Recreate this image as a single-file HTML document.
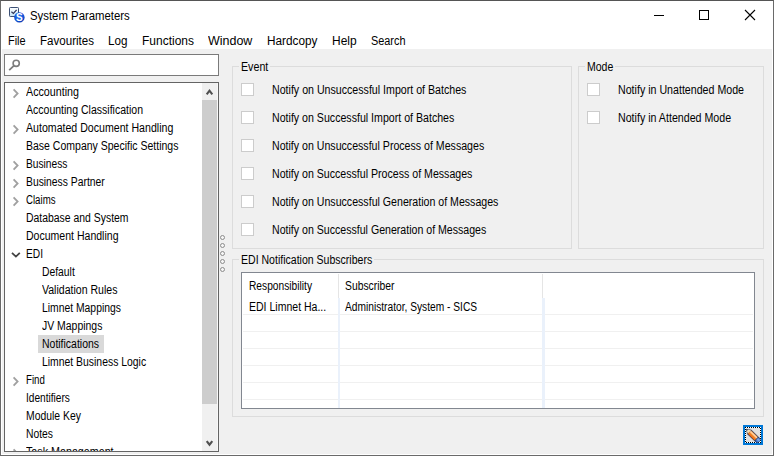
<!DOCTYPE html>
<html><head><meta charset="utf-8"><title>System Parameters</title>
<style>
html,body{margin:0;padding:0}
body{width:774px;height:456px;position:relative;overflow:hidden;background:#f0f0f0;font:12px/14px "Liberation Sans",Arial,sans-serif;color:#000}
div,span,svg{position:absolute;box-sizing:border-box}
.t{white-space:nowrap;transform-origin:0 0;display:block;line-height:14px;height:14px}
#frame{left:0;top:0;width:774px;height:456px;border:1px solid #6a6a6a;border-top-color:#555;pointer-events:none}
#inner{left:1px;top:1px;width:772px;height:454px;border:1px solid #fff;pointer-events:none}
#title{left:1px;top:1px;width:772px;height:48px;background:#fff}
#search{left:4px;top:54px;width:215px;height:22px;background:#fff;border:1px solid #7a7a7a}
#tree{left:4px;top:82px;width:215px;height:370px;background:#fff;border:1px solid #646464;overflow:hidden}
#sb{left:197px;top:0;width:16px;height:368px;background:#f0f0f0;border-right:1px solid #f8f8f8}
#thumb{left:0;top:17px;width:15px;height:304px;background:#cdcdcd}
#sel{left:33px;top:252px;width:66px;height:18px;background:#d9d9d9}
.gb{border:1px solid #dcdcdc}
.gl{background:#f0f0f0;height:14px}
.cb{width:13px;height:13px;background:#fff;border:1px solid #cccccc}
#grid{left:241px;top:272px;width:514px;height:137px;background:#fff;border:1px solid #828790}
.rl{left:243px;width:510px;height:1px;background:#f0f0f0}
.hs{width:1px;top:274px;height:24px;background:#e5e5e5}
.bs{width:2px;top:298px;height:110px;background:#eaf1fb}
.dot{left:220px;width:5px;height:5px;border:1px solid #8c8c8c;border-radius:50%;background:#f6f6f6}
#btn{left:743px;top:425px;width:20px;height:20px;border:2px solid #0078d7;background:#e1e1e1}
.fd{background:repeating-linear-gradient(90deg,#000 0 1px,#fff 1px 2px)}
.fv{background:repeating-linear-gradient(180deg,#000 0 1px,#fff 1px 2px)}
</style></head><body>
<div id="title"></div>
<svg id="appicon" style="left:9px;top:7px" width="17" height="17" viewBox="0 0 17 17">
<defs><linearGradient id="cbg" x1="0" y1="0" x2="0" y2="1"><stop offset="0" stop-color="#ffffff"/><stop offset="1" stop-color="#c4e4f7"/></linearGradient>
<radialGradient id="sg" cx="0.45" cy="0.4" r="0.65"><stop offset="0" stop-color="#2a78f0"/><stop offset="0.7" stop-color="#1150d8"/><stop offset="1" stop-color="#0a2f9a"/></radialGradient></defs>
<rect x="0.5" y="0.5" width="9" height="9" rx="0.8" fill="url(#cbg)" stroke="#3b4f74" stroke-width="1"/>
<path d="M2.4 4.8 L4.4 6.5 L7.6 2.9" fill="none" stroke="#2d3458" stroke-width="1.2"/>
<circle cx="10.4" cy="10.4" r="5.2" fill="url(#sg)"/>
<text x="10.4" y="14.3" font-family="Liberation Sans,sans-serif" font-weight="bold" font-size="10" fill="#fff" text-anchor="middle">S</text>
</svg>
<svg style="left:640px;top:0" width="134" height="32" viewBox="0 0 134 32">
<path d="M14 15.5 H24" stroke="#000" stroke-width="1"/>
<rect x="59.5" y="10.5" width="9" height="9" fill="none" stroke="#000" stroke-width="1"/>
<path d="M105 10 L115 20 M115 10 L105 20" stroke="#000" stroke-width="1.1"/>
</svg>
<div id="search"><svg style="left:3px;top:3px" width="14" height="14" viewBox="0 0 14 14"><circle cx="8.2" cy="5.3" r="3.1" fill="none" stroke="#7c7c7c" stroke-width="1.6"/><path d="M6 7.6 L1.2 12.2" stroke="#7c7c7c" stroke-width="1.8"/></svg></div>
<div id="tree">
<div id="sel"></div>
<svg class="cv" style="left:7px;top:5px" width="8" height="11" viewBox="0 0 8 11"><path d="M1.6 1.4 L5.6 5.5 L1.6 9.6" fill="none" stroke="#a0a0a0" stroke-width="1.8"/></svg><svg class="cv" style="left:7px;top:41px" width="8" height="11" viewBox="0 0 8 11"><path d="M1.6 1.4 L5.6 5.5 L1.6 9.6" fill="none" stroke="#a0a0a0" stroke-width="1.8"/></svg><svg class="cv" style="left:7px;top:77px" width="8" height="11" viewBox="0 0 8 11"><path d="M1.6 1.4 L5.6 5.5 L1.6 9.6" fill="none" stroke="#a0a0a0" stroke-width="1.8"/></svg><svg class="cv" style="left:7px;top:95px" width="8" height="11" viewBox="0 0 8 11"><path d="M1.6 1.4 L5.6 5.5 L1.6 9.6" fill="none" stroke="#a0a0a0" stroke-width="1.8"/></svg><svg class="cv" style="left:7px;top:113px" width="8" height="11" viewBox="0 0 8 11"><path d="M1.6 1.4 L5.6 5.5 L1.6 9.6" fill="none" stroke="#a0a0a0" stroke-width="1.8"/></svg><svg class="cv" style="left:6px;top:169px" width="10" height="7" viewBox="0 0 10 7"><path d="M1 0.9 L4.9 4.6 L8.8 0.9" fill="none" stroke="#444" stroke-width="1.8"/></svg><svg class="cv" style="left:7px;top:293px" width="8" height="11" viewBox="0 0 8 11"><path d="M1.6 1.4 L5.6 5.5 L1.6 9.6" fill="none" stroke="#a0a0a0" stroke-width="1.8"/></svg><svg class="cv" style="left:7px;top:365px" width="8" height="11" viewBox="0 0 8 11"><path d="M1.6 1.4 L5.6 5.5 L1.6 9.6" fill="none" stroke="#a0a0a0" stroke-width="1.8"/></svg>
<span class="t" id="t9" style="left:20.90px;top:2px;transform:scaleX(0.8927)">Accounting</span><span class="t" id="t10" style="left:20.90px;top:20px;transform:scaleX(0.8771)">Accounting Classification</span><span class="t" id="t11" style="left:20.90px;top:38px;transform:scaleX(0.8833)">Automated Document Handling</span><span class="t" id="t12" style="left:21.00px;top:56px;transform:scaleX(0.8754)">Base Company Specific Settings</span><span class="t" id="t13" style="left:21.00px;top:74px;transform:scaleX(0.8503)">Business</span><span class="t" id="t14" style="left:21.00px;top:92px;transform:scaleX(0.8612)">Business Partner</span><span class="t" id="t15" style="left:20.90px;top:110px;transform:scaleX(0.8045)">Claims</span><span class="t" id="t16" style="left:21.40px;top:128px;transform:scaleX(0.8681)">Database and System</span><span class="t" id="t17" style="left:21.40px;top:146px;transform:scaleX(0.8777)">Document Handling</span><span class="t" id="t18" style="left:21.40px;top:164px;transform:scaleX(0.8500)">EDI</span><span class="t" id="t19" style="left:37.20px;top:182px;transform:scaleX(0.8627)">Default</span><span class="t" id="t20" style="left:36.70px;top:200px;transform:scaleX(0.8785)">Validation Rules</span><span class="t" id="t21" style="left:37.20px;top:218px;transform:scaleX(0.8634)">Limnet Mappings</span><span class="t" id="t22" style="left:36.70px;top:236px;transform:scaleX(0.8707)">JV Mappings</span><span class="t" id="t23" style="left:37.20px;top:254px;transform:scaleX(0.8721)">Notifications</span><span class="t" id="t24" style="left:37.20px;top:272px;transform:scaleX(0.8670)">Limnet Business Logic</span><span class="t" id="t25" style="left:21.40px;top:290px;transform:scaleX(0.8098)">Find</span><span class="t" id="t26" style="left:21.40px;top:308px;transform:scaleX(0.8437)">Identifiers</span><span class="t" id="t27" style="left:21.20px;top:326px;transform:scaleX(0.8663)">Module Key</span><span class="t" id="t28" style="left:21.20px;top:344px;transform:scaleX(0.8612)">Notes</span><span class="t" id="t29" style="left:20.60px;top:362px;transform:scaleX(0.8934)">Task Management</span>
<div id="sb"><div id="thumb"></div>
<svg style="left:3px;top:6px" width="9" height="7" viewBox="0 0 9 7"><path d="M1.7 5.3 L4.5 1.7 L7.3 5.3" fill="none" stroke="#505050" stroke-width="2.1"/></svg>
<svg style="left:3px;top:357px" width="9" height="7" viewBox="0 0 9 7"><path d="M1.7 1.1 L4.5 4.7 L7.3 1.1" fill="none" stroke="#505050" stroke-width="2.1"/></svg>
</div>
</div>
<div class="dot" style="top:235px"></div><div class="dot" style="top:243px"></div><div class="dot" style="top:251px"></div><div class="dot" style="top:259px"></div><div class="dot" style="top:267px"></div>
<div class="gb" style="left:232px;top:66px;width:340px;height:183px"></div>
<div class="gl" style="left:239px;top:60px;width:31px"></div>
<div class="gb" style="left:578px;top:66px;width:186px;height:183px"></div>
<div class="gl" style="left:585px;top:60px;width:30px"></div>
<div class="gb" style="left:232px;top:259px;width:532px;height:158px"></div>
<div class="gl" style="left:239px;top:253px;width:135px"></div>
<div class="cb" style="left:241px;top:83px"></div><div class="cb" style="left:241px;top:111px"></div><div class="cb" style="left:241px;top:139px"></div><div class="cb" style="left:241px;top:167px"></div><div class="cb" style="left:241px;top:195px"></div><div class="cb" style="left:241px;top:223px"></div><div class="cb" style="left:587px;top:83px"></div><div class="cb" style="left:587px;top:111px"></div>
<div id="grid"></div>
<div class="rl" style="top:314px"></div><div class="rl" style="top:331px"></div><div class="rl" style="top:348px"></div><div class="rl" style="top:365px"></div><div class="rl" style="top:382px"></div><div class="rl" style="top:399px"></div>
<div class="hs" style="left:338px"></div><div class="hs" style="left:542px"></div>
<div class="bs" style="left:338px"></div><div class="bs" style="left:542px;width:3px"></div>
<span class="t" id="t0" style="left:30.00px;top:9px;transform:scaleX(0.9472)">System Parameters</span><span class="t" id="t1" style="left:8.30px;top:34px;transform:scaleX(0.9100)">File</span><span class="t" id="t2" style="left:39.70px;top:34px;transform:scaleX(0.9639)">Favourites</span><span class="t" id="t3" style="left:108.00px;top:34px;transform:scaleX(0.9740)">Log</span><span class="t" id="t4" style="left:142.00px;top:34px;transform:scaleX(0.9994)">Functions</span><span class="t" id="t5" style="left:207.50px;top:34px;transform:scaleX(1.0396)">Window</span><span class="t" id="t6" style="left:266.60px;top:34px;transform:scaleX(0.9813)">Hardcopy</span><span class="t" id="t7" style="left:332.10px;top:34px;transform:scaleX(0.9968)">Help</span><span class="t" id="t8" style="left:370.80px;top:34px;transform:scaleX(0.9074)">Search</span><span class="t" id="t30" style="left:241.00px;top:60px;transform:scaleX(0.8895)">Event</span><span class="t" id="t31" style="left:587.00px;top:60px;transform:scaleX(0.8761)">Mode</span><span class="t" id="t32" style="left:241.00px;top:253px;transform:scaleX(0.8782)">EDI Notification Subscribers</span><span class="t" id="t33" style="left:272.00px;top:83px;transform:scaleX(0.8859)">Notify on Unsuccessful Import of Batches</span><span class="t" id="t34" style="left:272.00px;top:111px;transform:scaleX(0.8846)">Notify on Successful Import of Batches</span><span class="t" id="t35" style="left:272.00px;top:139px;transform:scaleX(0.8838)">Notify on Unsuccessful Process of Messages</span><span class="t" id="t36" style="left:272.00px;top:167px;transform:scaleX(0.8837)">Notify on Successful Process of Messages</span><span class="t" id="t37" style="left:272.00px;top:195px;transform:scaleX(0.8839)">Notify on Unsuccessful Generation of Messages</span><span class="t" id="t38" style="left:272.00px;top:223px;transform:scaleX(0.8827)">Notify on Successful Generation of Messages</span><span class="t" id="t39" style="left:618.00px;top:83px;transform:scaleX(0.8868)">Notify in Unattended Mode</span><span class="t" id="t40" style="left:618.00px;top:111px;transform:scaleX(0.8877)">Notify in Attended Mode</span><span class="t" id="t41" style="left:249.20px;top:279px;transform:scaleX(0.8510)">Responsibility</span><span class="t" id="t42" style="left:345.10px;top:279px;transform:scaleX(0.8612)">Subscriber</span><span class="t" id="t43" style="left:249.20px;top:300px;transform:scaleX(0.8770)">EDI Limnet Ha...</span><span class="t" id="t44" style="left:345.10px;top:300px;transform:scaleX(0.8502)">Administrator, System - SICS</span>
<div id="btn"><div class="fd" style="left:0;top:0;width:16px;height:1px"></div><div class="fd" style="left:0;top:15px;width:16px;height:1px;background-position:1px 0"></div><div class="fv" style="left:0;top:0;width:1px;height:16px"></div><div class="fv" style="left:15px;top:0;width:1px;height:16px;background-position:0 1px"></div>
<svg style="left:0;top:0" width="16" height="16" viewBox="0 0 16 16">
<defs><linearGradient id="pg" x1="0" y1="0" x2="0" y2="1"><stop offset="0" stop-color="#f6923a"/><stop offset="0.3" stop-color="#ffd9b0"/><stop offset="0.55" stop-color="#f58a30"/><stop offset="1" stop-color="#e8600a"/></linearGradient>
<linearGradient id="eg" x1="0" y1="0" x2="0" y2="1"><stop offset="0" stop-color="#3c6cc8"/><stop offset="0.35" stop-color="#7fb0f0"/><stop offset="1" stop-color="#1f4fb0"/></linearGradient></defs>
<g transform="translate(1.0,1.8) rotate(44)">
<path d="M-0.2 0 L4.6 -3 L16 -3 Q18.8 -3 18.8 0 Q18.8 3 16 3 L4.6 3 Z" fill="#2e3f63"/>
<path d="M0.3 0 L2.2 -1.1 L2.2 1.1 Z" fill="#6a6a6a"/>
<path d="M2.2 -1.1 L4.8 -2.4 L4.8 2.4 L2.2 1.1 Z" fill="#f7dfb4"/>
<rect x="4.8" y="-2.4" width="9.4" height="4.8" fill="url(#pg)"/>
<rect x="14.9" y="-2.4" width="3.3" height="4.8" rx="1" fill="url(#eg)"/>
</g></svg></div>
<div id="inner"></div><div id="frame"></div>
</body></html>
